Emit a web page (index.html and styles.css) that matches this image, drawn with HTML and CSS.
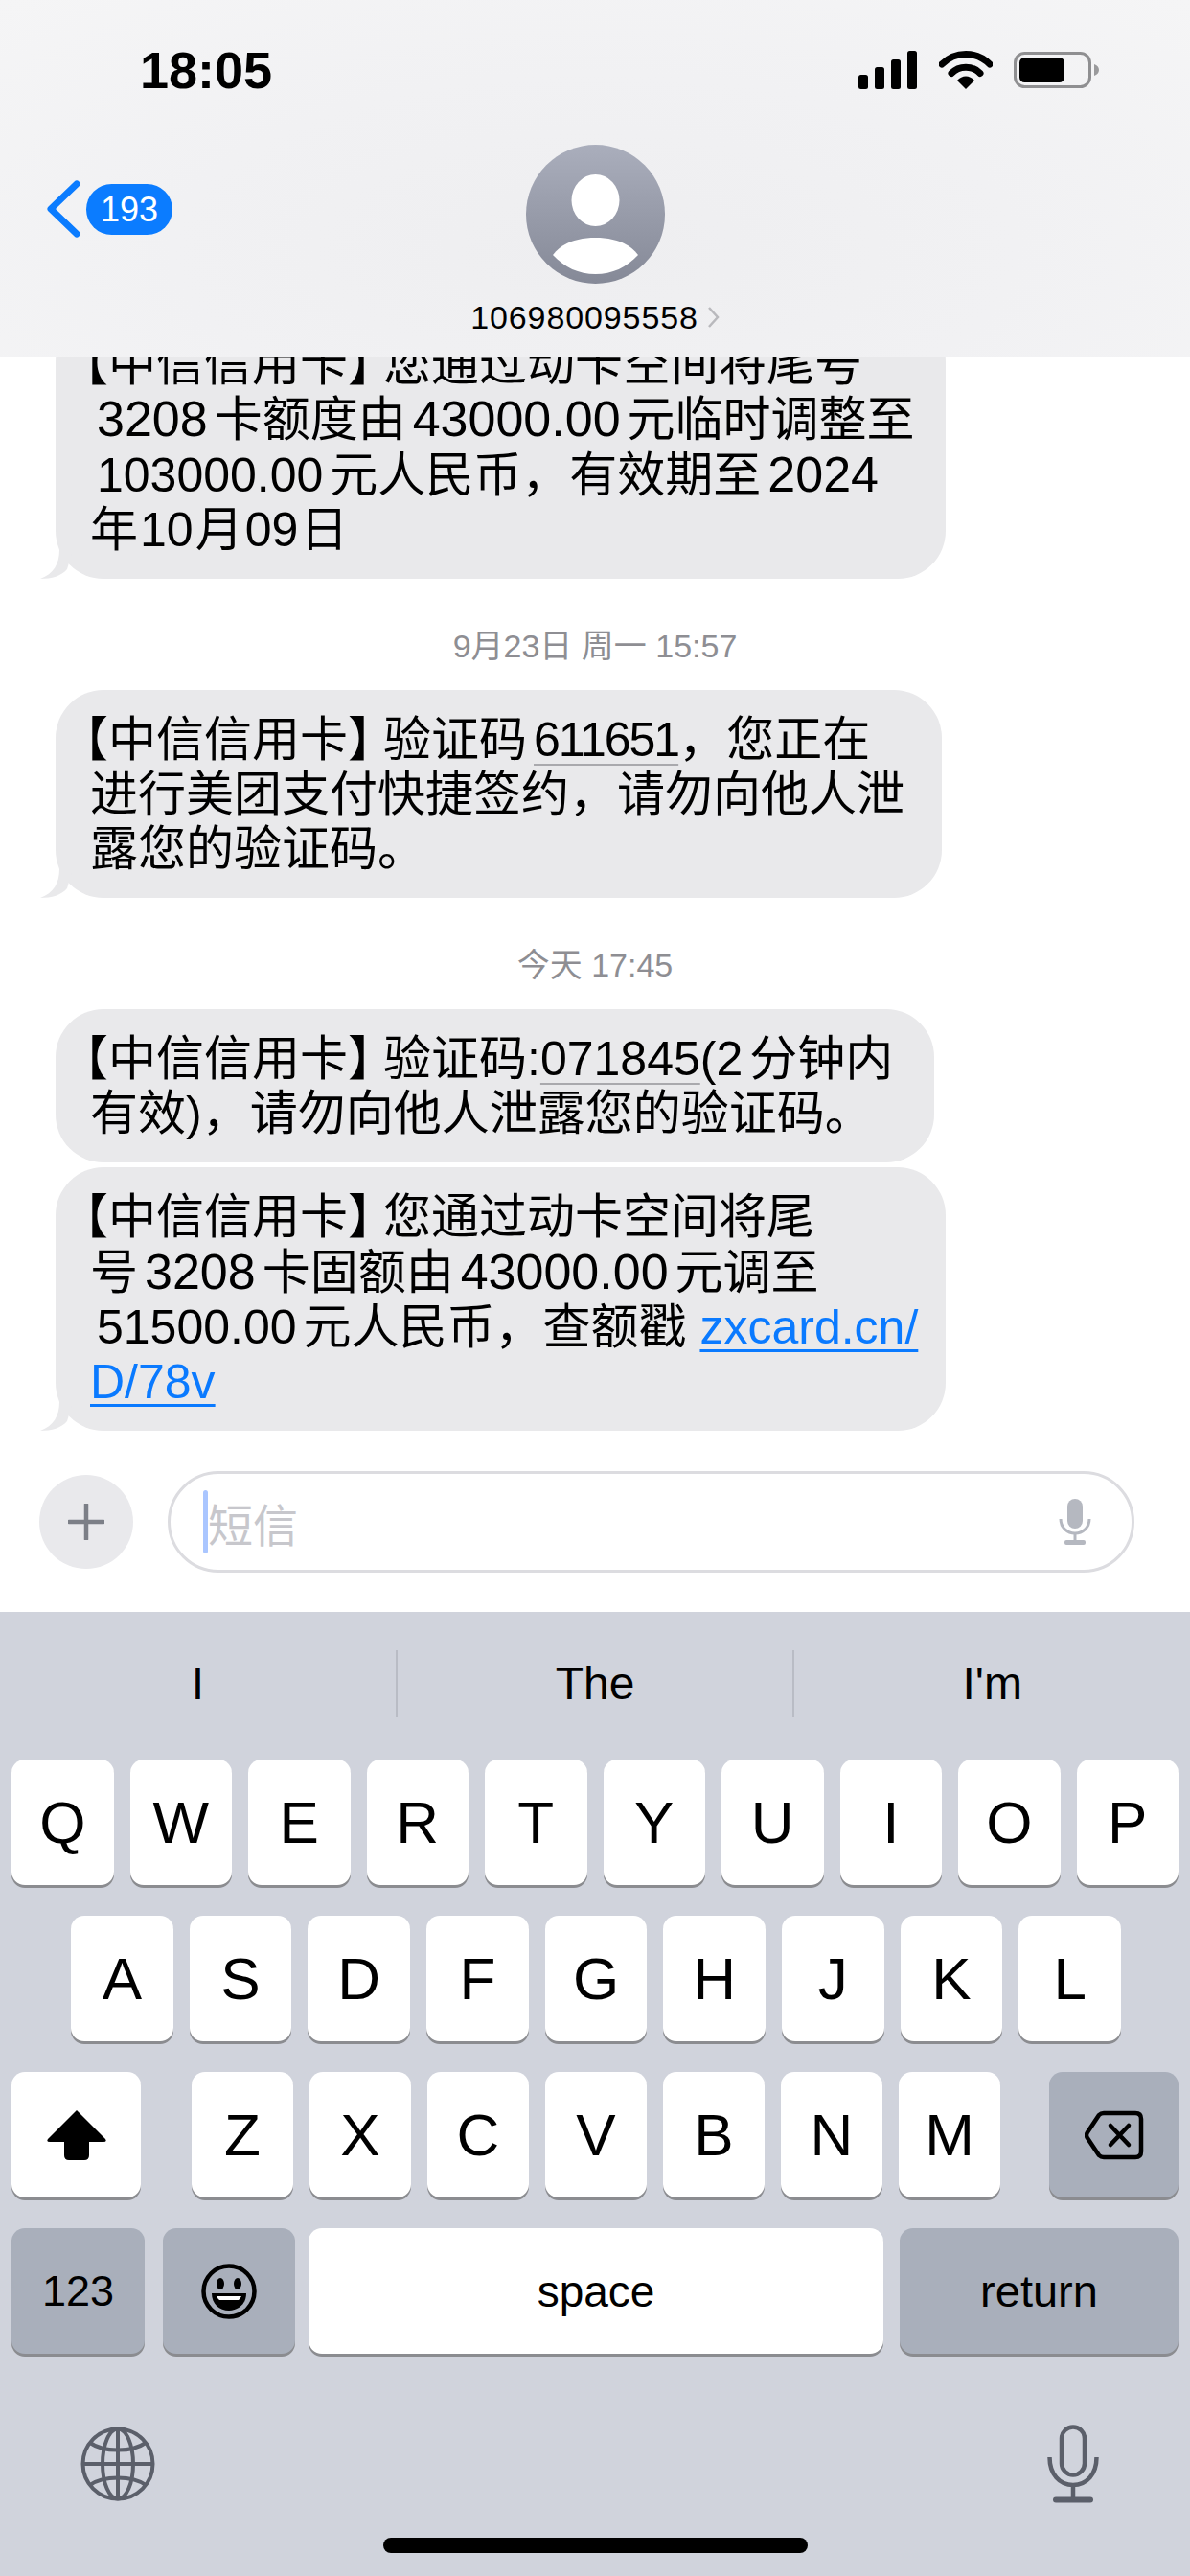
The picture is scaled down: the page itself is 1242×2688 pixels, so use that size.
FILE: index.html
```html
<!DOCTYPE html>
<html lang="zh-CN">
<head>
  <meta charset="UTF-8" />
  <meta name="viewport" content="width=device-width, initial-scale=1.0"/>
  <title>信息</title>
  <link rel="stylesheet" href="styles.css">
</head>
<body>
  <div class="phone">
    <!-- Header -->
    <header class="top">
      <div class="status-bar">
        <div class="time">18:05</div>
        <div class="status-icons">
          <svg class="ic-signal" width="62" height="40" viewBox="0 0 62 40">
            <rect x="0" y="25" width="10" height="15" rx="2.5"/>
            <rect x="17" y="17" width="10" height="23" rx="2.5"/>
            <rect x="34" y="9" width="10" height="31" rx="2.5"/>
            <rect x="51" y="0" width="10" height="40" rx="2.5"/>
          </svg>
          <svg class="ic-wifi" width="56" height="40" viewBox="0 0 56 40">
            <path d="M3 14 C17 0 39 0 53 14" fill="none" stroke="#000" stroke-width="7" stroke-linecap="round"/>
            <path d="M13 23.5 C21 15 35 15 43 23.5" fill="none" stroke="#000" stroke-width="7" stroke-linecap="round"/>
            <path d="M19 31 C24 25 32 25 37 31 L28 40 Z"/>
          </svg>
          <svg class="ic-battery" width="90" height="38" viewBox="0 0 90 38">
            <rect x="1.5" y="1.5" width="78" height="35" rx="10" fill="none" stroke="#8f8f91" stroke-width="3"/>
            <rect x="6" y="6" width="47" height="26" rx="5.5" fill="#000"/>
            <path d="M84 13 C87 14 89 16 89 19 C89 22 87 24 84 25 Z" fill="#9a9a9c"/>
          </svg>
        </div>
      </div>
      <div class="nav">
        <div class="back">
          <svg width="36" height="60" viewBox="0 0 36 60">
            <path d="M32 4 L5 30 L32 56" fill="none" stroke="#0b7cff" stroke-width="7" stroke-linecap="round" stroke-linejoin="round"/>
          </svg>
          <span class="badge">193</span>
        </div>
        <div class="contact">
          <div class="avatar">
            <svg width="145" height="145" viewBox="0 0 145 145">
              <ellipse cx="72.500" cy="58" rx="25" ry="27" fill="#fff"/>
              <path d="M28 115 C38 102 54 97 72.500 97 C91 97 107 102 117 115 C105 128 90 135 72.500 135 C55 135 40 128 28 115 Z" fill="#fff"/>
            </svg>
          </div>
          <div class="contact-name">
            <span>106980095558</span>
            <svg width="13" height="24" viewBox="0 0 13 24">
              <path d="M2 2 L11 12 L2 22" fill="none" stroke="#b9b9bd" stroke-width="2.500"/>
            </svg>
          </div>
        </div>
        <div></div>
      </div>
    </header>

    <!-- Messages -->
    <main class="messages">
      <div class="bubble bubble-lg">
        <span class="brand">【中信信用卡】</span>您通过动卡空间将尾号<br>
        <span class="num wide">3208</span>卡额度由<span class="num wide">43000.00</span>元临时调整至<br>
        <span class="num">103000.00</span>元人民币，有效期至<span class="num wide">2024</span><br>
        年<span class="tight">10</span>月<span class="tight">09</span>日
        <svg class="tail" width="34" height="30" viewBox="0 0 34 30"><path d="M20 0 C20 14 14 25 0 30 C12 30 22 27 28 20 L34 0 Z"/></svg>
      </div>

      <div class="stamp">9月23日 周一 15:57</div>

      <div class="bubble bubble-md">
        <span class="brand">【中信信用卡】</span>验证码<span class="num code">611651</span>，您正在<br>
        进行美团支付快捷签约，请勿向他人泄<br>
        露您的验证码。
        <svg class="tail" width="34" height="30" viewBox="0 0 34 30"><path d="M20 0 C20 14 14 25 0 30 C12 30 22 27 28 20 L34 0 Z"/></svg>
      </div>

      <div class="stamp">今天 17:45</div>

      <div class="bubble bubble-sm">
        <span class="brand">【中信信用卡】</span>验证码:<span class="code">071845</span>(2<span class="num">分钟内</span><br>
        有效)，请勿向他人泄露您的验证码。
      </div>
      <div class="bubble bubble-lg bubble-next">
        <span class="brand">【中信信用卡】</span>您通过动卡空间将尾<br>
        号<span class="num wide">3208</span>卡固额由<span class="num wide">43000.00</span>元调至<br>
        <span class="num">51500.00</span>元人民币，查额戳 <a class="link" href="#">zxcard.cn/<br>D/78v</a>
        <svg class="tail" width="34" height="30" viewBox="0 0 34 30"><path d="M20 0 C20 14 14 25 0 30 C12 30 22 27 28 20 L34 0 Z"/></svg>
      </div>
    </main>

    <!-- Composer -->
    <div class="composer">
      <div class="plus">
        <svg width="38" height="38" viewBox="0 0 38 38">
          <path d="M19 1 V37 M1 19 H37" stroke="#7c7f87" stroke-width="4.500" stroke-linecap="round"/>
        </svg>
      </div>
      <div class="field">
        <span class="cursor"></span>
        <span class="placeholder">短信</span>
        <svg class="field-mic" width="34" height="48" viewBox="0 0 34 48">
          <rect x="9" y="0" width="16" height="31" rx="8" fill="#b5b8c0"/>
          <path d="M2 21 C2 30 9 36 17 36 C25 36 32 30 32 21" fill="none" stroke="#b5b8c0" stroke-width="3"/>
          <path d="M17 36 V44" stroke="#b5b8c0" stroke-width="3"/>
          <rect x="6" y="43" width="22" height="5" rx="2" fill="#b5b8c0"/>
        </svg>
      </div>
    </div>

    <!-- Keyboard -->
    <section class="keyboard">
      <div class="suggestions">
        <div class="suggestion">I</div>
        <div class="suggestion">The</div>
        <div class="suggestion">I'm</div>
      </div>

      <div class="keys">
        <div class="key-row">
          <div class="key">Q</div><div class="key">W</div><div class="key">E</div><div class="key">R</div><div class="key">T</div>
          <div class="key">Y</div><div class="key">U</div><div class="key">I</div><div class="key">O</div><div class="key">P</div>
        </div>
        <div class="key-row row-inset">
          <div class="key">A</div><div class="key">S</div><div class="key">D</div><div class="key">F</div><div class="key">G</div>
          <div class="key">H</div><div class="key">J</div><div class="key">K</div><div class="key">L</div>
        </div>
        <div class="key-row row-split">
          <div class="key key-side key-shift">
            <svg width="62" height="52" viewBox="0 0 62 52">
              <path d="M31 0 L61 30 Q63 33 59 33 H44 V47 Q44 52 39 52 H23 Q18 52 18 47 V33 H3 Q-1 33 1 30 Z"/>
            </svg>
          </div>
          <div class="key-group">
            <div class="key">Z</div><div class="key">X</div><div class="key">C</div><div class="key">V</div>
            <div class="key">B</div><div class="key">N</div><div class="key">M</div>
          </div>
          <div class="key key-side key-dark">
            <svg width="62" height="52" viewBox="0 0 62 52">
              <path d="M20 3 H53 Q59 3 59 9 V43 Q59 49 53 49 H20 Q17 49 15 47 L3 29 Q1 26 3 23 L15 5 Q17 3 20 3 Z" fill="none" stroke="#000" stroke-width="4.500" stroke-linejoin="round"/>
              <path d="M27 16 L46 36 M46 16 L27 36" stroke="#000" stroke-width="4.500" stroke-linecap="round"/>
            </svg>
          </div>
        </div>
        <div class="key-row">
          <div class="key key-dark key-num">123</div>
          <div class="key key-dark key-emoji">
            <svg width="58" height="58" viewBox="0 0 58 58">
              <circle cx="29" cy="29" r="26.500" fill="none" stroke="#000" stroke-width="4.500"/>
              <ellipse cx="20" cy="21" rx="4" ry="6"/>
              <ellipse cx="38" cy="21" rx="4" ry="6"/>
              <path d="M11 31 H47 C47 42 39 49 29 49 C19 49 11 42 11 31 Z"/>
              <path d="M16 34 H42 C41 36 40 37 39 38 H19 C18 37 17 36 16 34 Z" fill="#fff"/>
            </svg>
          </div>
          <div class="key key-space">space</div>
          <div class="key key-dark key-return">return</div>
        </div>
      </div>

      <div class="kb-bottom">
        <svg width="78" height="78" viewBox="0 0 78 78" fill="none" stroke="#5b5f6a" stroke-width="4">
          <circle cx="39" cy="39" r="36.500"/>
          <ellipse cx="39" cy="39" rx="16" ry="36.500"/>
          <path d="M39 2 V76 M2 39 H76"/>
          <path d="M10 17 C24 27 54 27 68 17 M10 61 C24 51 54 51 68 61"/>
        </svg>
        <svg width="54" height="82" viewBox="0 0 54 82" fill="none" stroke="#5b5f6a" stroke-width="4.500">
          <rect x="15" y="2.500" width="24" height="50" rx="12"/>
          <path d="M2.500 34 C2.500 52 13 63 27 63 C41 63 51.500 52 51.500 34"/>
          <path d="M27 63 V78"/>
          <path d="M9 78.500 H45" stroke-width="6" stroke-linecap="round"/>
        </svg>
      </div>
      <div class="home-bar"></div>
    </section>
  </div>
</body>
</html>
```

FILE: styles.css
```css
html, body {
  margin: 0;
  padding: 0;
}

body {
  font-family: "Liberation Sans", "Noto Sans CJK SC", sans-serif;
  background-color: #fff;
  color: #000;
}

.phone {
  width: 1242px;
  height: 2688px;
  display: flex;
  flex-direction: column;
  overflow: hidden;
}

/* header */
.top {
  flex-shrink: 0;
  height: 372px;
  background: radial-gradient(ellipse at 50% 70%, #eeeef0 0%, #f1f1f3 50%, #f5f5f6 100%);
  border-bottom: 1px solid #c9c9cc;
}

.status-bar {
  height: 146px;
  padding: 0 94px 0 146px;
  display: flex;
  align-items: center;
  justify-content: space-between;
}

.time {
  font-size: 54px;
  font-weight: bold;
}

.status-icons {
  display: flex;
  align-items: center;
  gap: 22px;
}

.nav {
  padding-top: 5px;
  display: grid;
  grid-template-columns: 1fr auto 1fr;
}

.back {
  margin: 37px 0 0 48px;
  display: flex;
  align-items: center;
  gap: 6px;
  align-self: start;
}

.badge {
  width: 90px;
  height: 53px;
  border-radius: 27px;
  background-color: #0b7cff;
  color: #fff;
  font-size: 36px;
  line-height: 53px;
  text-align: center;
}

.contact {
  display: flex;
  flex-direction: column;
  align-items: center;
}

.avatar {
  width: 145px;
  height: 145px;
  border-radius: 50%;
  overflow: hidden;
  background: linear-gradient(#aaaebc, #858997);
}

.avatar svg {
  display: block;
}

.contact-name {
  margin-top: 15px;
  display: flex;
  align-items: center;
  gap: 9px;
  font-size: 34px;
  letter-spacing: 0.9px;
  line-height: 40px;
}

/* messages */
.messages {
  flex: 1;
  min-height: 0;
  overflow: hidden;
  display: flex;
  flex-direction: column;
  justify-content: flex-end;
  padding: 0 0 42px 58px;
}

.bubble {
  flex-shrink: 0;
  position: relative;
  box-sizing: border-box;
  padding: 24px 20px 22px 36px;
  border-radius: 50px;
  background-color: #e9e9eb;
  font-size: 50px;
  line-height: 57px;
  white-space: nowrap;
}

.bubble-lg {
  width: 929px;
}

.bubble-md {
  width: 925px;
}

.bubble-sm {
  width: 917px;
}

.bubble-next {
  margin-top: 5px;
}

.tail {
  position: absolute;
  left: -16px;
  bottom: 0;
  fill: #e9e9eb;
}

/* corner brackets sit tight in the ios font */
.brand {
  margin: 0 -13px 0 -31px;
}

.num {
  margin: 0 7px;
}

.tight {
  margin: 0 2px;
}

.wide {
  font-size: 52px;
}

.code {
  text-decoration: underline;
  text-decoration-color: #a9a9ad;
  text-decoration-thickness: 2px;
  text-underline-offset: 8px;
}

.num.code {
  margin-right: 0;
  letter-spacing: -2px;
}

.link {
  color: #0a7aff;
  text-decoration: underline;
  text-decoration-thickness: 3px;
  text-underline-offset: 6px;
}

.stamp {
  flex-shrink: 0;
  margin: 51px 58px 27px 0;
  text-align: center;
  font-size: 34px;
  line-height: 38px;
  color: #8e8e93;
}

/* composer */
.composer {
  flex-shrink: 0;
  padding: 0 58px 41px 41px;
  display: flex;
  align-items: center;
  gap: 36px;
}

.plus {
  width: 98px;
  height: 98px;
  border-radius: 50%;
  background-color: #e9e9ec;
  display: flex;
  align-items: center;
  justify-content: center;
}

.field {
  flex: 1;
  height: 106px;
  box-sizing: border-box;
  padding: 0 42px 0 34px;
  border: 3px solid #dcdce0;
  border-radius: 53px;
  display: flex;
  align-items: center;
}

.cursor {
  width: 5px;
  height: 66px;
  border-radius: 3px;
  background-color: #aac6ff;
}

.placeholder {
  flex: 1;
  font-size: 47px;
  color: #c7c7cc;
}

/* keyboard */
.keyboard {
  flex-shrink: 0;
  height: 1006px;
  background-color: #d0d3dc;
}

.suggestions {
  height: 150px;
  display: flex;
  align-items: center;
}

.suggestion {
  flex: 1;
  height: 70px;
  line-height: 70px;
  text-align: center;
  font-size: 48px;
}

.suggestion + .suggestion {
  border-left: 2px solid #b9bcc5;
}

.keys {
  padding: 4px 12px 0;
  display: flex;
  flex-direction: column;
  gap: 32px;
}

.key-row {
  display: flex;
  gap: 17px;
}

.row-inset {
  padding: 0 60px 0 62px;
}

.row-split {
  justify-content: space-between;
}

.key-group {
  display: flex;
  gap: 17px;
  margin-left: 2px;
}

.key {
  flex: 1;
  height: 131px;
  border-radius: 14px;
  background-color: #fff;
  box-shadow: 0 3px 0 #8b8c90;
  display: flex;
  align-items: center;
  justify-content: center;
  font-size: 62px;
}

.key-group .key {
  flex: none;
  width: 106px;
}

.key-side {
  flex: none;
  width: 135px;
}

.key-dark {
  background-color: #a9afbb;
}

.key-num {
  flex: none;
  width: 139px;
  font-size: 45px;
}

.key-emoji {
  flex: none;
  width: 138px;
  margin: 0 -3px 0 2px;
}

.key-space {
  font-size: 46px;
}

.key-return {
  flex: none;
  width: 291px;
  font-size: 47px;
}

.kb-bottom {
  padding: 70px 95px 0 84px;
  height: 90px;
  display: flex;
  align-items: center;
  justify-content: space-between;
}

.home-bar {
  width: 443px;
  height: 16px;
  margin: 32px auto 0;
  border-radius: 8px;
  background-color: #000;
}
```
